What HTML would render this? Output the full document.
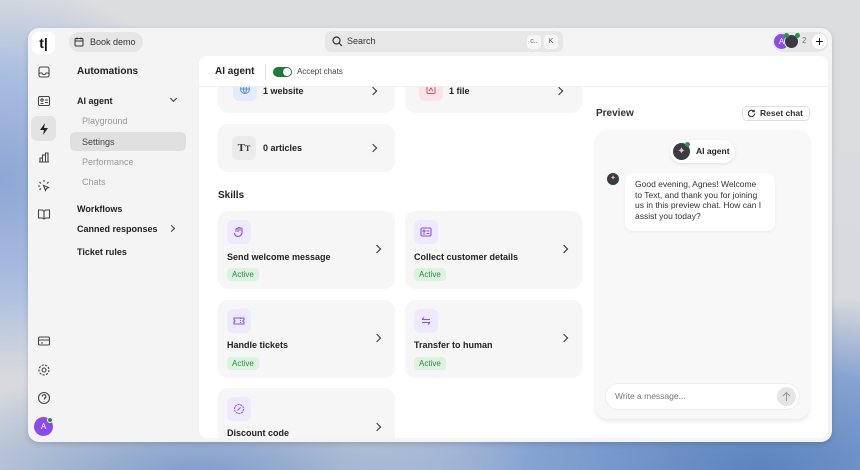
<!DOCTYPE html>
<html><head><style>
*{box-sizing:border-box;margin:0;padding:0}
body{width:860px;height:470px;overflow:hidden;font-family:"Liberation Sans",sans-serif;position:relative;
background:radial-gradient(ellipse 300px 260px at 0px 180px,#8da6d4 0%,#a9bde0 40%,rgba(220,225,235,0) 75%),
radial-gradient(ellipse 520px 220px at 760px 470px,#5b83bf 0%,#86a4d2 45%,rgba(200,210,225,0) 80%),
radial-gradient(ellipse 400px 140px at 200px 480px,#7a9acb 0%,rgba(200,210,225,0) 80%),
linear-gradient(#dcdddf,#d6d8dc);}
.win{position:absolute;left:28px;top:28px;width:804px;height:414px;background:#f4f4f4;border-radius:11px;box-shadow:0 2px 6px rgba(0,0,0,.15);overflow:hidden}
.abs{position:absolute}
.ic{position:absolute;width:14px;height:14px}
.panel{position:absolute;left:171px;top:28px;width:629px;height:382px;background:#fff;border-radius:8px;overflow:hidden}
.card{position:absolute;background:#f6f6f6;border-radius:10px}
.t{font-size:9px;color:#222;font-weight:bold;position:absolute}
.chev{position:absolute;width:6px;height:6px;border-right:1.5px solid #333;border-top:1.5px solid #333;transform:rotate(45deg)}
.badge{position:absolute;background:#dbf3df;color:#2d8a47;font-size:8px;padding:2px 5px;border-radius:4px}
.sq{position:absolute;width:24px;height:24px;border-radius:6px;background:#efe9fd}
.nav{position:absolute;left:49px;font-size:9px}
</style></head><body>
<div class="win">
 <div class="abs" style="left:4px;top:4px;width:23px;height:22px;background:#fff;border-radius:6px;font-weight:bold;font-size:14px;color:#111;text-align:center;line-height:22px">t|</div>
 <div class="abs" style="left:41px;top:4px;width:74px;height:20px;background:#e6e6e6;border-radius:10px;font-size:9px;color:#333;line-height:20px;padding-left:21px">Book demo</div>
 <svg class="ic" style="left:46px;top:9px;width:10px;height:10px" viewBox="0 0 10 10"><rect x="1" y="1.5" width="8" height="7.5" rx="1" fill="none" stroke="#333"/><path d="M1 4h8M3 0.5v2M7 0.5v2" stroke="#333"/></svg>
 <div class="abs" style="left:297px;top:3px;width:238px;height:21px;background:#e7e7e7;border-radius:6px;font-size:9px;color:#333;line-height:21px;padding-left:22px">Search</div>
 <svg class="ic" style="left:304px;top:8px;width:11px;height:11px" viewBox="0 0 11 11"><circle cx="4.5" cy="4.5" r="3.5" fill="none" stroke="#333" stroke-width="1.2"/><path d="M7 7l3 3" stroke="#333" stroke-width="1.2"/></svg>
 <div class="abs" style="left:499px;top:7px;width:14px;height:14px;background:#f6f6f6;border-radius:4px;font-size:7px;color:#666;text-align:center;line-height:14px">c..</div>
 <div class="abs" style="left:516px;top:7px;width:14px;height:14px;background:#f6f6f6;border-radius:4px;font-size:7px;color:#555;text-align:center;line-height:14px">K</div>
 <div class="abs" style="left:745px;top:4px;width:55px;height:20px;background:#e6e6e6;border-radius:10px"></div>
 <div class="abs" style="left:746px;top:6px;width:15px;height:15px;border-radius:50%;background:#8b4be8;color:#fff;font-size:8px;text-align:center;line-height:15px">A</div>
 <div class="abs" style="left:756px;top:6px;width:15px;height:15px;border-radius:50%;background:#3a3a44;border:1px solid #e6e6e6"></div>
 <div class="abs" style="left:756px;top:5px;width:5px;height:5px;border-radius:50%;background:#1e9a45"></div>
 <div class="abs" style="left:767px;top:5px;width:5px;height:5px;border-radius:50%;background:#1e9a45"></div>
 <div class="abs" style="left:774px;top:8px;font-size:8px;color:#777">2</div>
 <div class="abs" style="left:784px;top:6px;width:15px;height:15px;border-radius:50%;background:#fff;font-size:14px;line-height:14px;text-align:center;color:#111">+</div>
 <svg class="ic" style="left:9px;top:37px" viewBox="0 0 14 14" fill="none" stroke="#444" stroke-width="1.1"><rect x="2" y="2" width="10" height="10" rx="2"/><path d="M2 8h3l1 1.5h2L9 8h3"/></svg>
 <svg class="ic" style="left:9px;top:66px" viewBox="0 0 14 14" fill="none" stroke="#444" stroke-width="1.1"><rect x="1.5" y="2.5" width="11" height="9" rx="1.5"/><circle cx="5" cy="6" r="1.2"/><path d="M3.5 9.5h3M8 6h3M8 8.5h3"/></svg>
 <div class="abs" style="left:3px;top:88px;width:25px;height:25px;background:#e3e3e3;border-radius:6px"></div>
 <svg class="ic" style="left:9px;top:94px" viewBox="0 0 14 14"><path d="M8 1L3 8h4l-1 5 5-7H7z" fill="#222"/></svg>
 <svg class="ic" style="left:9px;top:122px" viewBox="0 0 14 14" fill="none" stroke="#444" stroke-width="1.1"><path d="M2 12h10M3 12V8h2.5v4M5.5 12V5h3v7M8.5 12V3h2.5v9"/></svg>
 <svg class="ic" style="left:9px;top:151px" viewBox="0 0 14 14" fill="none" stroke="#444" stroke-width="1.1"><path d="M7 1v2M2.5 3l1.5 1.5M1 7h2M2.5 11l1.5-1.5M11.5 3L10 4.5M6.5 6.5l5 2-2 1-1 2z"/></svg>
 <svg class="ic" style="left:9px;top:179px" viewBox="0 0 14 14" fill="none" stroke="#444" stroke-width="1.1"><path d="M1.5 3h4L7 4.5 8.5 3h4v8h-4L7 12 5.5 11h-4zM7 4.5V12"/></svg>
 <svg class="ic" style="left:9px;top:306px" viewBox="0 0 14 14" fill="none" stroke="#444" stroke-width="1.1"><rect x="1.5" y="3" width="11" height="8" rx="1.5"/><path d="M1.5 6h11M4 9h2"/></svg>
 <svg class="ic" style="left:9px;top:335px" viewBox="0 0 14 14" fill="none" stroke="#444" stroke-width="1.1"><circle cx="7" cy="7" r="2"/><circle cx="7" cy="7" r="5" stroke-dasharray="2.2 1.3"/></svg>
 <svg class="ic" style="left:9px;top:363px" viewBox="0 0 14 14" fill="none" stroke="#444" stroke-width="1.1"><circle cx="7" cy="7" r="5.5"/><path d="M5.3 5.5a1.8 1.8 0 1 1 2.2 1.7V8.5M7 10v.5"/></svg>
 <div class="abs" style="left:6px;top:389px;width:19px;height:19px;border-radius:50%;background:#8b4be8;color:#fff;font-size:8px;text-align:center;line-height:19px">A</div>
 <div class="abs" style="left:19px;top:389px;width:6px;height:6px;border-radius:50%;background:#1e8a3e;border:1px solid #fff"></div>
 <div class="nav" style="top:38px;font-size:10px;font-weight:bold;color:#222">Automations</div>
 <div class="nav" style="top:68px;font-weight:bold;color:#222">AI agent</div>
 <div class="chev" style="left:143px;top:68px;transform:rotate(135deg);width:5px;height:5px;border-width:1.2px"></div>
 <div class="nav" style="left:54px;top:88px;color:#999">Playground</div>
 <div class="abs" style="left:42px;top:104px;width:116px;height:19px;background:#e0e0e0;border-radius:5px"></div>
 <div class="nav" style="left:54px;top:109px;color:#444">Settings</div>
 <div class="nav" style="left:54px;top:129px;color:#999">Performance</div>
 <div class="nav" style="left:54px;top:149px;color:#999">Chats</div>
 <div class="nav" style="top:176px;font-weight:bold;color:#222">Workflows</div>
 <div class="nav" style="top:196px;font-weight:bold;color:#222">Canned responses</div>
 <div class="chev" style="left:141px;top:198px;width:5px;height:5px;border-width:1.2px"></div>
 <div class="nav" style="top:219px;font-weight:bold;color:#222">Ticket rules</div>
 <div class="panel">
  <div class="card" style="left:19px;top:0;width:177px;height:57px"></div>
  <div class="abs" style="left:34px;top:21px;width:24px;height:24px;border-radius:6px;background:#e2ecfd"></div>
  <svg class="ic" style="left:40px;top:27px;width:12px;height:12px" viewBox="0 0 12 12" fill="none" stroke="#5b8fe8"><circle cx="6" cy="6" r="4.5"/><path d="M1.5 6h9M6 1.5c-2 2.5-2 6.5 0 9M6 1.5c2 2.5 2 6.5 0 9"/></svg>
  <div class="t" style="left:64px;top:30px">1 website</div>
  <div class="chev" style="left:171px;top:32px"></div>
  <div class="card" style="left:206px;top:0;width:177px;height:57px"></div>
  <div class="abs" style="left:220px;top:21px;width:24px;height:24px;border-radius:6px;background:#fbe3e6"></div>
  <svg class="ic" style="left:226px;top:27px;width:12px;height:12px" viewBox="0 0 12 12" fill="none" stroke="#d5566a"><rect x="2" y="1.5" width="8" height="9" rx="1"/><path d="M4 8l2-3 2 3"/></svg>
  <div class="t" style="left:250px;top:30px">1 file</div>
  <div class="chev" style="left:357px;top:32px"></div>
  <div class="card" style="left:19px;top:68px;width:177px;height:48px"></div>
  <div class="abs" style="left:33px;top:80px;width:24px;height:24px;border-radius:6px;background:#ebebeb;font-size:11px;font-weight:bold;text-align:center;line-height:24px;color:#333;font-family:'Liberation Serif',serif">T<span style="font-size:8px">T</span></div>
  <div class="t" style="left:64px;top:87px">0 articles</div>
  <div class="chev" style="left:171px;top:89px"></div>
  <div class="abs" style="left:19px;top:134px;font-size:10px;font-weight:bold;color:#222">Skills</div>
  <div class="card" style="left:19px;top:155px;width:177px;height:78px"></div>
  <div class="sq" style="left:28px;top:164px"></div>
  <svg class="ic" style="left:34px;top:170px;width:12px;height:12px" viewBox="0 0 12 12" fill="none" stroke="#8a55e6" stroke-width="1.1"><path d="M3 6V3.5a1 1 0 0 1 2 0V6M5 5V2.5a1 1 0 0 1 2 0V5M7 5V3a1 1 0 0 1 2 0v4a4 4 0 0 1-7 2L1.5 7"/></svg>
  <div class="t" style="left:28px;top:196px">Send welcome message</div>
  <div class="chev" style="left:175px;top:190px"></div>
  <div class="badge" style="left:28px;top:212px">Active</div>
  <div class="card" style="left:206px;top:155px;width:177px;height:78px"></div>
  <div class="sq" style="left:215px;top:164px"></div>
  <svg class="ic" style="left:221px;top:170px;width:12px;height:12px" viewBox="0 0 12 12" fill="none" stroke="#8a55e6" stroke-width="1.1"><rect x="1" y="2" width="10" height="8" rx="1.2"/><circle cx="4" cy="5" r="1"/><path d="M2.8 8h2.5M6.5 5h3M6.5 7.5h3"/></svg>
  <div class="t" style="left:215px;top:196px">Collect customer details</div>
  <div class="chev" style="left:362px;top:190px"></div>
  <div class="badge" style="left:215px;top:212px">Active</div>
  <div class="card" style="left:19px;top:244px;width:177px;height:78px"></div>
  <div class="sq" style="left:28px;top:253px"></div>
  <svg class="ic" style="left:34px;top:259px;width:12px;height:12px" viewBox="0 0 12 12" fill="none" stroke="#8a55e6" stroke-width="1.1"><path d="M1 3h10v2a1 1 0 0 0 0 2v2H1V7a1 1 0 0 0 0-2z"/><path d="M7.5 3v6" stroke-dasharray="1 1"/></svg>
  <div class="t" style="left:28px;top:284px">Handle tickets</div>
  <div class="chev" style="left:175px;top:279px"></div>
  <div class="badge" style="left:28px;top:301px">Active</div>
  <div class="card" style="left:206px;top:244px;width:177px;height:78px"></div>
  <div class="sq" style="left:215px;top:253px"></div>
  <svg class="ic" style="left:221px;top:259px;width:12px;height:12px" viewBox="0 0 12 12" fill="none" stroke="#8a55e6" stroke-width="1.1"><path d="M2 4.5h8M4 2.5l-2 2M10 7.5H2M8 9.5l2-2"/></svg>
  <div class="t" style="left:215px;top:284px">Transfer to human</div>
  <div class="chev" style="left:362px;top:279px"></div>
  <div class="badge" style="left:215px;top:301px">Active</div>
  <div class="card" style="left:19px;top:332px;width:177px;height:70px"></div>
  <div class="sq" style="left:28px;top:341px"></div>
  <svg class="ic" style="left:34px;top:347px;width:12px;height:12px" viewBox="0 0 12 12" fill="none" stroke="#8a55e6" stroke-width="1.1"><circle cx="6" cy="6" r="4.5" stroke-dasharray="2 .8"/><path d="M4.5 7.5l3-3"/></svg>
  <div class="t" style="left:28px;top:372px">Discount code</div>
  <div class="chev" style="left:175px;top:368px"></div>
  <div class="abs" style="left:0;top:0;width:629px;height:31px;background:#fff;border-bottom:1px solid #eee"></div>
  <div class="abs" style="left:16px;top:10px;font-size:10px;font-weight:bold;color:#222">AI agent</div>
  <div class="abs" style="left:66px;top:8px;width:1px;height:16px;background:#e6e6e6"></div>
  <div class="abs" style="left:74px;top:11px;width:19px;height:10px;border-radius:5px;background:#1f7a3a"></div>
  <div class="abs" style="left:84px;top:12px;width:8px;height:8px;border-radius:50%;background:#fff"></div>
  <div class="abs" style="left:98px;top:11px;font-size:8px;color:#444">Accept chats</div>
  <div class="abs" style="left:397px;top:52px;font-size:10px;font-weight:bold;color:#333">Preview</div>
  <div class="abs" style="left:543px;top:50px;width:68px;height:15px;border:1px solid #ddd;border-radius:5px;font-size:8.5px;font-weight:bold;color:#333;line-height:13px;padding-left:17px">Reset chat</div>
  <svg class="ic" style="left:548px;top:53px;width:9px;height:9px" viewBox="0 0 10 10" fill="none" stroke="#333" stroke-width="1.2"><path d="M8.5 5a3.5 3.5 0 1 1-1-2.5M8 .8v2.2H5.8"/></svg>
  <div class="abs" style="left:397px;top:74px;width:213px;height:289px;background:#f8f8f8;border-radius:12px;box-shadow:0 2px 5px rgba(0,0,0,.1)"></div>
  <div class="abs" style="left:471px;top:84px;width:65px;height:23px;background:#fff;border-radius:12px;box-shadow:0 1px 3px rgba(0,0,0,.1);font-size:8.5px;font-weight:bold;color:#222;line-height:23px;padding-left:26px">AI agent</div>
  <div class="abs" style="left:474px;top:87px;width:17px;height:17px;border-radius:50%;background:#3b3b45;color:#f2b8c0;font-size:10px;text-align:center;line-height:17px">✦</div>
  <div class="abs" style="left:486px;top:86px;width:5px;height:5px;border-radius:50%;background:#2a9a4a"></div>
  <div class="abs" style="left:408px;top:117px;width:12px;height:12px;border-radius:50%;background:#3b3b45;color:#f2b8c0;font-size:7px;text-align:center;line-height:12px">✦</div>
  <div class="abs" style="left:426px;top:117px;width:150px;height:58px;background:#fff;border-radius:8px;box-shadow:0 1px 3px rgba(0,0,0,.06);font-size:8.5px;color:#333;line-height:10.7px;padding:6px 10px">Good evening, Agnes! Welcome to Text, and thank you for joining us in this preview chat. How can I assist you today?</div>
  <div class="abs" style="left:406px;top:327px;width:195px;height:27px;background:#fff;border-radius:14px;border:1px solid #eee;font-size:8.5px;color:#777;line-height:25px;padding-left:9px">Write a message...</div>
  <div class="abs" style="left:578px;top:331px;width:19px;height:19px;border-radius:50%;background:#e5e5e5"></div>
  <svg class="ic" style="left:582px;top:335px;width:11px;height:11px" viewBox="0 0 11 11" fill="none" stroke="#999" stroke-width="1.1"><path d="M5.5 10V1.5M2 5l3.5-3.5L9 5"/></svg>
 </div>
</div>
</body></html>
